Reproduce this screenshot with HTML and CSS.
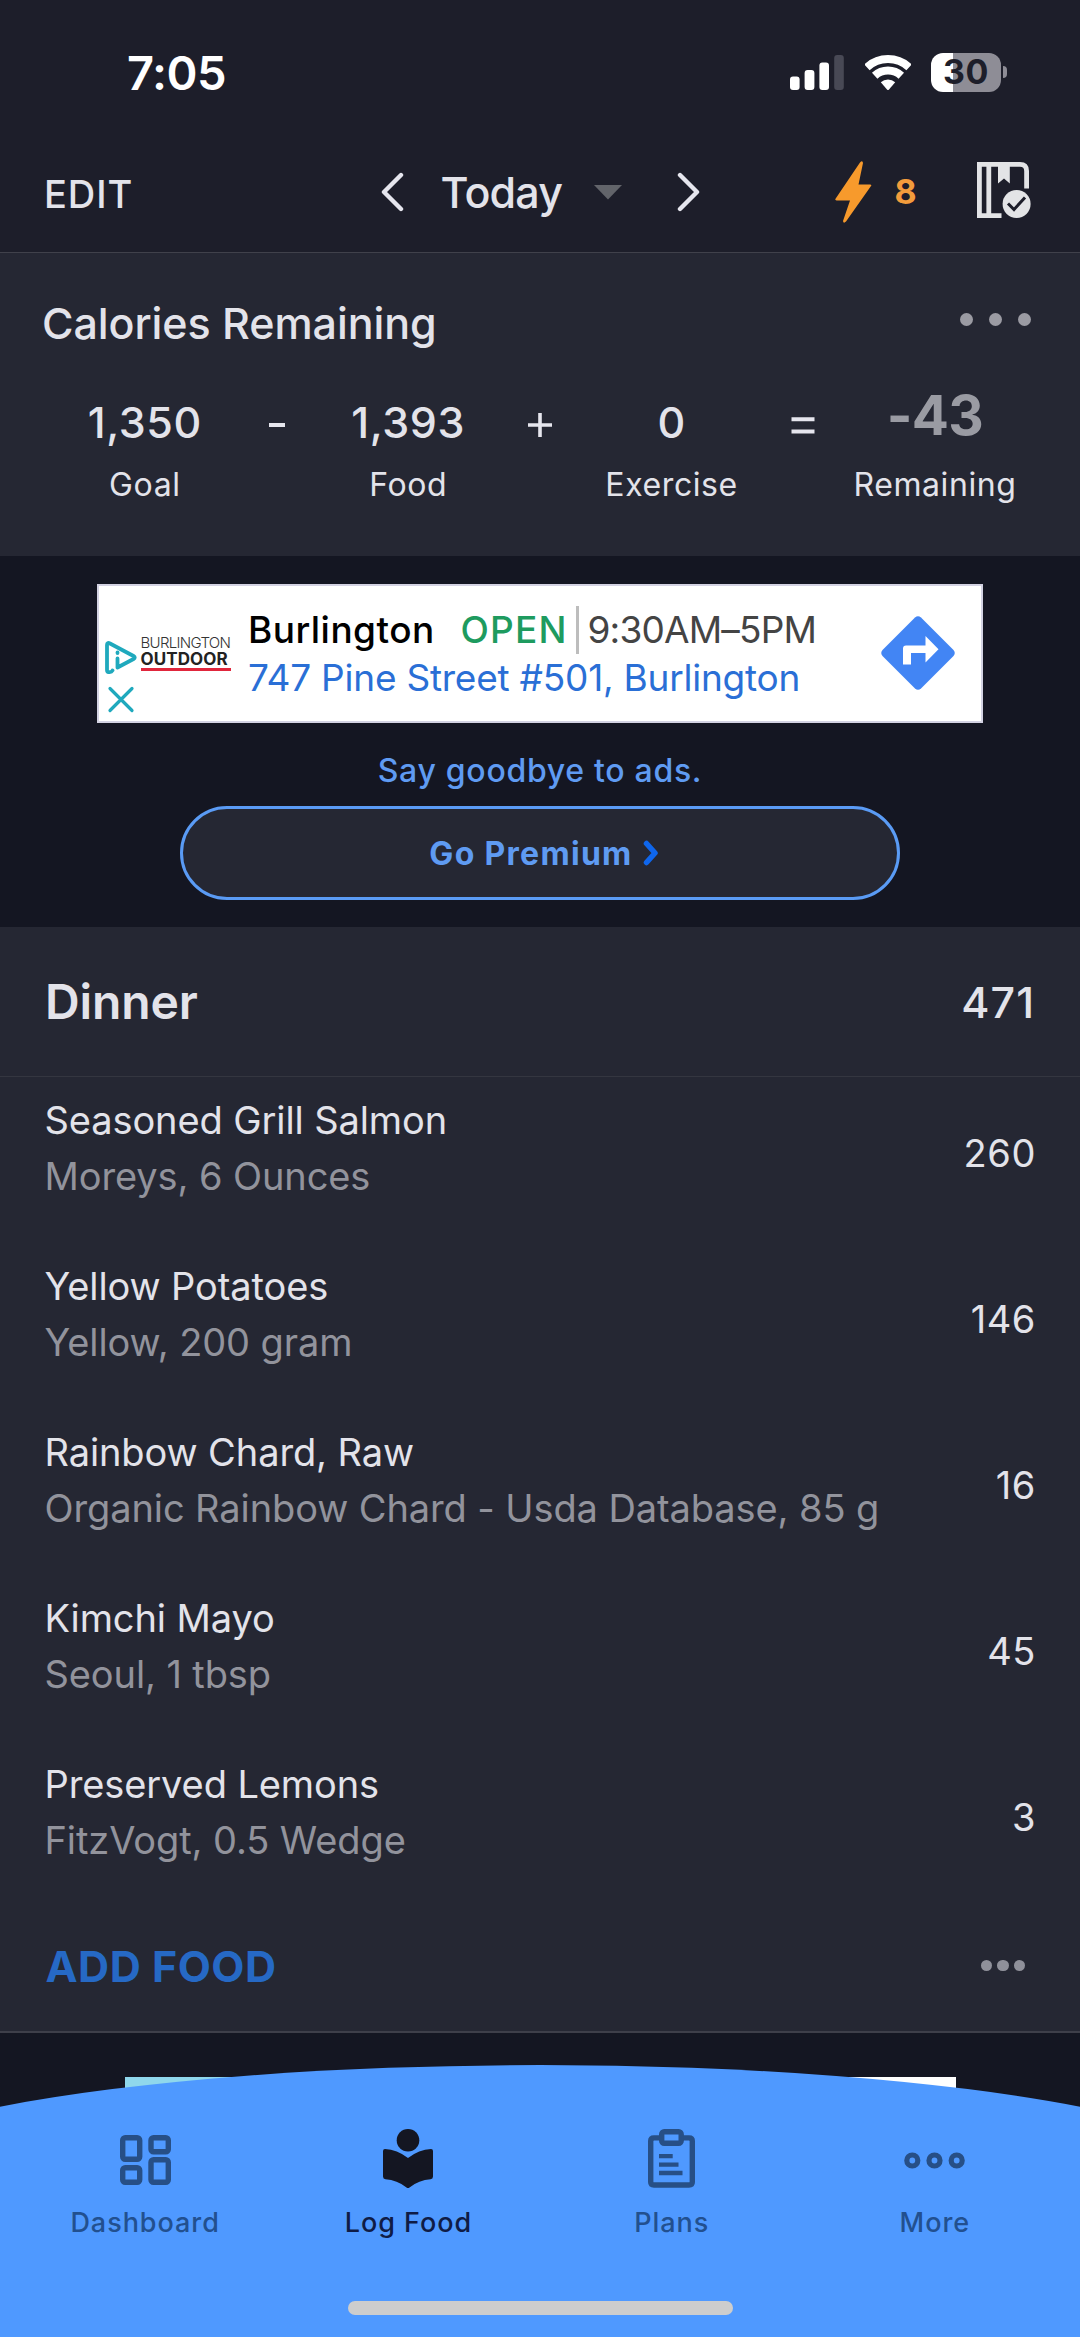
FILE: index.html
```
<!DOCTYPE html>
<html lang="en">
<head>
<meta charset="utf-8">
<title>Food Diary</title>
<link rel="stylesheet" href="styles.css">
</head>
<body>
<div class="screen">
  <header class="top">
    <div class="status">
      <span class="time">7:05</span>
      <div class="status-icons">
        <svg class="signal" width="54" height="35" viewBox="0 0 54 35" fill="#fff">
          <rect x="0" y="21.5" width="9.6" height="13.5" rx="3"/>
          <rect x="14.6" y="15" width="9.8" height="20" rx="3"/>
          <rect x="29.4" y="7.5" width="9.6" height="27.5" rx="3"/>
          <rect x="44.2" y="0" width="9.6" height="35" rx="3" fill="#484955"/>
        </svg>
        <svg class="wifi" width="46" height="35" viewBox="0 0 46 35">
          <g fill="none" stroke="#fff" stroke-width="8">
            <path d="M1.9 12.3A31 31 0 0 1 44.1 12.3"/>
            <path d="M9.7 20.7A19.5 19.5 0 0 1 36.3 20.7"/>
          </g>
          <path fill="#fff" d="M15.8 27.2A11 11 0 0 1 30.2 27.2L24 34.4Q23 35.4 22 34.4Z"/>
        </svg>
        <div class="battery"><span class="cell">30</span><span class="nub"></span></div>
      </div>
    </div>
    <nav class="toolbar">
      <span class="edit">EDIT</span>
      <div class="day">
        <svg width="24" height="40" viewBox="0 0 24 40" fill="none" stroke="#e6e6ee" stroke-width="4.4" stroke-linecap="round" stroke-linejoin="round"><path d="M21 3L4 20L21 37"/></svg>
        <span class="today">Today</span>
        <svg class="caret" width="28" height="15" viewBox="0 0 28 15"><path d="M0 0H28L14 14.5Z" fill="#62646a"/></svg>
        <svg width="24" height="40" viewBox="0 0 24 40" fill="none" stroke="#e6e6ee" stroke-width="4.4" stroke-linecap="round" stroke-linejoin="round"><path d="M3 3L20 20L3 37"/></svg>
      </div>
      <div class="streak">
        <svg width="37" height="62" viewBox="0 0 37 62" fill="#f79a2c"><path d="M28 2L23.5 23.5H35Q37 23.5 36 25L11 60.5Q8.500 63 8 60L15 39.500H1.500Q-.5 39 .7 37.500L25 1.500Q27.500-1 28 2Z"/></svg>
        <span>8</span>
      </div>
      <svg class="book" width="54" height="57" viewBox="0 0 54 57">
        <g fill="none" stroke="#e3e4e6" stroke-width="4.800">
          <path d="M24.500 53.600H2.400V2.400H43Q49.600 2.400 49.600 9V26.500M11.800 2V53"/>
        </g>
        <path fill="#e3e4e6" d="M21 3H32.800V21.500L27 16.500L21 21.500Z"/>
        <circle cx="39.600" cy="42" r="14" fill="#e3e4e6"/>
        <path d="M31 41.500L37 47.500L48 35.500" fill="none" stroke="#1d1e2a" stroke-width="3"/>
      </svg>
    </nav>
  </header>

  <section class="calories">
    <div class="cal-head">
      <h1>Calories Remaining</h1>
      <div class="dots wide"><i></i><i></i><i></i></div>
    </div>
    <div class="equation">
      <div class="term"><b>1,350</b><span>Goal</span></div>
      <svg class="op" width="16" height="4"><rect width="16" height="4" fill="#e6e6ee"/></svg>
      <div class="term"><b>1,393</b><span>Food</span></div>
      <svg class="op" width="24" height="24"><path d="M0 12H24M12 0V24" stroke="#e6e6ee" stroke-width="3.600"/></svg>
      <div class="term"><b>0</b><span>Exercise</span></div>
      <svg class="op" width="24" height="17"><path d="M.5 2.200H23.500M.5 14.500H23.500" stroke="#e6e6ee" stroke-width="4"/></svg>
      <div class="term"><b class="left">-43</b><span>Remaining</span></div>
    </div>
  </section>

  <section class="promo">
    <div class="ad">
      <div class="ad-brand">
        <svg class="choices" width="33" height="73" viewBox="0 0 33 73" fill="none" stroke="#1fa9bd" stroke-width="3.800" stroke-linecap="round" stroke-linejoin="round">
          <path d="M7.500 29.500Q6.500 31.500 3.500 31Q2 31 2 29V4Q2 1 5 2.500L28.500 15Q31 16.500 28.500 18L12.500 26.500V17.500"/>
          <path d="M12.500 11.500V12"/>
          <path stroke-width="3.200" d="M5 47.500L27 69.500M27 47.500L5 69.500"/>
        </svg>
        <div class="logo"><span class="logo-a">BURLINGTON</span><span class="logo-b">OUTDOOR</span></div>
      </div>
      <div class="ad-text">
        <div class="ad-line"><span class="store">Burlington</span><span class="open">OPEN</span><span class="hours">9:30AM–5PM</span></div>
        <div class="addr">747 Pine Street #501, Burlington</div>
      </div>
      <svg class="go" width="74" height="74" viewBox="0 0 74 74">
        <path fill="#4285f4" d="M34 1.500Q37-1 40 1.500L72.500 34Q75 37 72.500 40L40 72.500Q37 75 34 72.500L1.500 40Q-1 37 1.500 34Z"/>
        <path fill="#fff" d="M22 48.500V32.500Q22 29.500 25 29.500H44.500V20L57.500 33.200L44.500 46.500V37H30V48.500Z"/>
      </svg>
    </div>
    <p class="bye">Say goodbye to ads.</p>
    <a class="premium"><span>Go Premium</span>
      <svg width="16" height="26" viewBox="0 0 16 26" fill="none" stroke="#0f66ec" stroke-width="5.500" stroke-linecap="round" stroke-linejoin="round"><path d="M3.500 3.500L12 13L3.500 22.500"/></svg>
    </a>
  </section>

  <section class="meal">
    <div class="meal-head"><h2>Dinner</h2><span>471</span></div>
    <ul class="foods">
      <li><div><p>Seasoned Grill Salmon</p><p class="sub">Moreys, 6 Ounces</p></div><span>260</span></li>
      <li><div><p>Yellow Potatoes</p><p class="sub">Yellow, 200 gram</p></div><span>146</span></li>
      <li><div><p>Rainbow Chard, Raw</p><p class="sub">Organic Rainbow Chard - Usda Database, 85 g</p></div><span>16</span></li>
      <li><div><p>Kimchi Mayo</p><p class="sub">Seoul, 1 tbsp</p></div><span>45</span></li>
      <li><div><p>Preserved Lemons</p><p class="sub">FitzVogt, 0.5 Wedge</p></div><span>3</span></li>
    </ul>
    <div class="meal-foot"><span>ADD FOOD</span><div class="dots tight"><i></i><i></i><i></i></div></div>
  </section>

  <div class="next-ad"></div>

  <footer class="tabs">
    <svg class="arc" width="1080" height="272" viewBox="0 0 1080 272"><path fill="#4f99ff" d="M0 41.700A720 123 0 0 1 1080 41.700V272H0Z"/></svg>
    <div class="tab-row">
      <div class="tab">
        <svg width="51" height="50" viewBox="0 0 51 50" fill="none" stroke="#274f86" stroke-width="5.400">
          <rect x="2.700" y="2.700" width="17" height="21.600" rx="2.500"/><rect x="31" y="2.700" width="17.300" height="14" rx="2.500"/>
          <rect x="2.700" y="32.700" width="17" height="14.600" rx="2.500"/><rect x="31" y="24.700" width="17.300" height="22.600" rx="2.500"/>
        </svg>
        <span>Dashboard</span>
      </div>
      <div class="tab active">
        <svg class="raise" width="50" height="60" viewBox="0 0 50 60" fill="#141622">
          <circle cx="25" cy="11.300" r="11.300"/>
          <path d="M2 20Q14 20.500 25 29Q36 20.500 48 20Q50 20 50 22V47.500Q50 50 47.500 50.300Q36 51 26.500 58.500Q25 59.700 23.500 58.500Q14 51 2.500 50.300Q0 50 0 47.500V22Q0 20 2 20Z"/>
        </svg>
        <span>Log Food</span>
      </div>
      <div class="tab">
        <svg class="raise" width="47" height="59" viewBox="0 0 47 59" fill="none" stroke="#274f86" stroke-width="5.400">
          <path d="M12 8.900H6Q2.700 8.900 2.700 12V53Q2.700 56 6 56H41Q44.300 56 44.300 53V12Q44.300 8.900 41 8.900H35"/>
          <rect x="13.700" y="2.700" width="19.500" height="11.500" rx="2.500"/>
          <path stroke-width="4.300" d="M11 27.200H24.700M11 35.700H30.500M11 44H34.500"/>
        </svg>
        <span>Plans</span>
      </div>
      <div class="tab">
        <svg width="61" height="17" viewBox="0 0 61 17" fill="none" stroke="#274f86" stroke-width="5.200"><circle cx="8.300" cy="8.500" r="5.500"/><circle cx="30.500" cy="8.500" r="5.500"/><circle cx="52.700" cy="8.500" r="5.500"/></svg>
        <span>More</span>
      </div>
    </div>
    <div class="home"></div>
  </footer>
</div>
</body>
</html>
```
FILE: styles.css
```
* { box-sizing: border-box; margin: 0; padding: 0; }
body { background: #141622; font-family: "Inter", "Liberation Sans", sans-serif; color: #e3e3ea; }
svg { display: block; flex: none; }
.screen { position: relative; width: 1080px; height: 2337px; overflow: hidden; }

/* status bar and toolbar */
.top { height: 253px; background: #1d1e2a; border-bottom: 1px solid #40414b; }
.status { height: 144px; padding: 0 73px 0 127px; display: flex; align-items: center; justify-content: space-between; }
.time { font-size: 47px; font-weight: 600; letter-spacing: -.5px; color: #fff; }
.status-icons { display: flex; align-items: center; }
.wifi { margin: 0 20px 0 21px; }
.battery { display: flex; align-items: center; gap: 2px; }
.cell { width: 70px; height: 39px; padding-left: 12px; border-radius: 12px; background: linear-gradient(90deg, #fff 22px, #8e8d96 22px); color: #1d1e2a; font-size: 34px; font-weight: 700; line-height: 38px; letter-spacing: .5px; }
.nub { width: 4px; height: 12px; border-radius: 0 4px 4px 0; background: #8e8d96; }
.toolbar { height: 96px; padding: 0 49px 0 44px; display: flex; align-items: center; }
.edit { width: 335.5px; padding-top: 4px; font-size: 38px; font-weight: 500; letter-spacing: .9px; }
.day { display: flex; align-items: center; width: 455.5px; }
.today { width: 154px; margin-left: 37px; font-size: 43px; font-weight: 500; letter-spacing: -.8px; }
.caret { margin: 0 55px 0 -1px; }
.streak { display: flex; align-items: center; gap: 22.5px; width: 142px; color: #f39c3c; font-size: 34px; font-weight: 700; }
.streak span { margin-top: -1px; }
.book { margin-top: -3px; }

/* calories summary */
.calories { height: 303px; padding: 44px 49px 0 42px; background: #252733; }
.cal-head { display: flex; justify-content: space-between; align-items: center; height: 52px; }
h1 { font-size: 43px; font-weight: 500; line-height: 52px; letter-spacing: -.07px; }
.dots { display: flex; }
.dots i { border-radius: 50%; }
.wide { gap: 16px; margin-top: -7px; }
.wide i { width: 13px; height: 13px; background: #9b9ba3; }
.equation { display: grid; grid-template-columns: repeat(7, 131.700px); justify-items: center; margin: 43px 0 0 37px; }
.term { display: flex; flex-direction: column; align-items: center; }
.term b { font-size: 43px; font-weight: 500; line-height: 60px; letter-spacing: .6px; }
.term .left { font-size: 55px; font-weight: 700; line-height: 47px; letter-spacing: -.6px; margin-bottom: 13px; color: #9a9ba3; }
.term span { margin-top: 13px; font-size: 32px; line-height: 40px; letter-spacing: .6px; white-space: nowrap; }
.op { align-self: start; margin-top: 21px; }
.op[height="4"] { margin-top: 31px; }
.op[height="17"] { margin-top: 25px; }

/* advert and premium upsell */
.promo { height: 371px; padding-top: 28px; display: flex; flex-direction: column; align-items: center; }
.ad { display: flex; width: 886px; height: 139px; background: #fff; border: 2px solid #d3d2e2; color: #000; }
.ad-brand { display: flex; width: 149px; padding-left: 5.500px; }
.choices { margin-top: 55px; }
.logo { margin: 48px 0 0 3px; width: 90px; }
.logo span { display: block; height: 16px; line-height: 16px; }
.logo-a { font-size: 15px; font-weight: 300; letter-spacing: -.7px; color: #333; margin-top: 1px; }
.logo span.logo-b { font-size: 17px; font-weight: 700; letter-spacing: .1px; height: 20px; border-bottom: 3px solid #e0263c; color: #222; }
.ad-text { width: 589.5px; padding-top: 20px; font-size: 37px; line-height: 48px; white-space: nowrap; }
.ad-line { display: flex; }
.store { width: 212.5px; font-weight: 500; letter-spacing: .46px; }
.open { width: 118px; font-weight: 500; letter-spacing: 1.200px; color: #1e9b5f; border-right: 3px solid #bdbdbd; }
.hours { padding-left: 9px; letter-spacing: -.82px; color: #444; }
.addr { letter-spacing: -.23px; color: #2a6fd6; }
.go { margin-top: 30px; margin-left: 43px; }
.bye { margin-top: 24px; font-size: 32px; font-weight: 500; line-height: 48px; letter-spacing: .7px; color: #5f9bf2; }
.premium { display: flex; align-items: center; justify-content: center; gap: 10px; width: 720px; height: 94px; margin-top: 11px; border: 3px solid #5a9bf5; border-radius: 47px; background: #252733; font-size: 32px; font-weight: 700; letter-spacing: 1.300px; color: #5f9bf2; padding-left: 8px; }

/* meal */
.meal { background: #252733; border-bottom: 2px solid #3e3f4a; height: 1106px; }
.meal-head { display: flex; justify-content: space-between; align-items: center; height: 150px; padding: 0 47px 0 45px; border-bottom: 1px solid #343640; }
h2 { font-size: 48px; font-weight: 600; letter-spacing: -.1px; }
.meal-head span { font-size: 43px; font-weight: 500; letter-spacing: 1px; margin-right: -2px; }
.foods { list-style: none; }
.foods li { display: flex; justify-content: space-between; align-items: center; height: 166px; padding: 16px 44px 39px 44.500px; font-size: 38px; letter-spacing: -.1px; }
.foods p { line-height: 55.500px; }
.foods .sub { color: #92939c; }
.foods span { padding-top: 8px; letter-spacing: .6px; }
.meal-foot { display: flex; justify-content: space-between; align-items: center; height: 117px; padding: 0 55px 0 45.5px; font-size: 43px; font-weight: 700; letter-spacing: .5px; color: #2669c5; }
.tight { gap: 5px; }
.tight i { width: 11.500px; height: 11.500px; background: #8f909a; }

.next-ad { width: 831px; height: 40px; margin: 44px 0 0 124.5px; background: linear-gradient(90deg, #8fd7ec 50%, #fff 50%); }

/* tab bar overlaps the scrolled diary */
.tabs { position: absolute; left: 0; bottom: 0; width: 1080px; height: 272px; padding: 64px 13.500px 0; }
.arc { position: absolute; left: 0; top: 0; }
.tab-row { position: relative; display: grid; grid-template-columns: repeat(4, 1fr); }
.tab { display: grid; grid-template-rows: 62px 36px; row-gap: 14px; place-items: center; color: #22508f; font-size: 27px; font-weight: 500; line-height: 36px; letter-spacing: .95px; }
.raise { margin-top: -3px; }
.active { color: #0f1c46; }
.home { position: relative; width: 385px; height: 14px; margin: 60px auto 0; border-radius: 7px; background: #cdcdcd; }
```
